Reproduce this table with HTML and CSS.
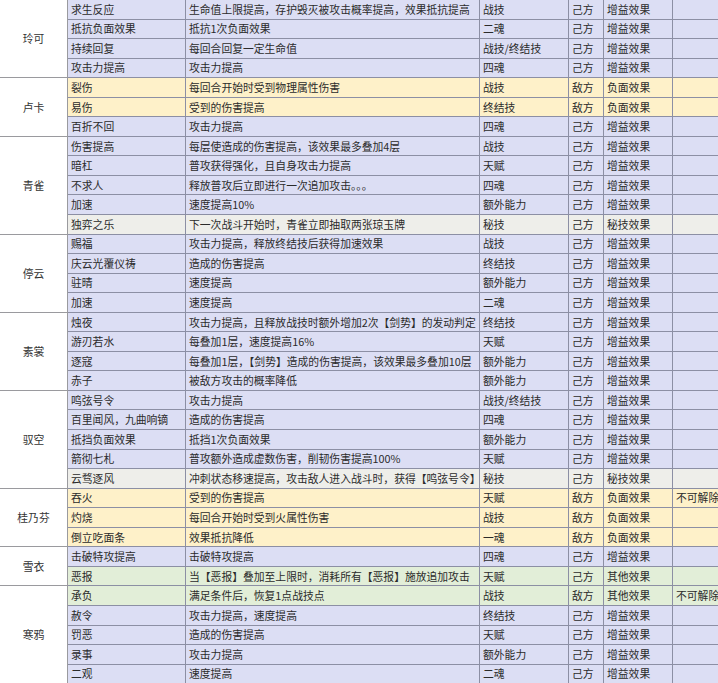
FILE: index.html
```html
<!DOCTYPE html>
<html lang="zh-CN">
<head>
<meta charset="utf-8">
<title>角色效果表</title>
<link rel="stylesheet" href="styles.css">
</head>
<body>
<table class="sheet">
<colgroup>
<col class="c-name"><col class="c-eff"><col class="c-desc"><col class="c-src"><col class="c-tgt"><col class="c-type"><col class="c-note">
</colgroup>
<tbody>
<tr class="buff"><td class="name" rowspan="4">玲可</td><td>求生反应</td><td>生命值上限提高，存护毁灭被攻击概率提高，效果抵抗提高</td><td>战技</td><td>己方</td><td>增益效果</td><td></td></tr>
<tr class="buff"><td>抵抗负面效果</td><td>抵抗1次负面效果</td><td>二魂</td><td>己方</td><td>增益效果</td><td></td></tr>
<tr class="buff"><td>持续回复</td><td>每回合回复一定生命值</td><td>战技/终结技</td><td>己方</td><td>增益效果</td><td></td></tr>
<tr class="buff"><td>攻击力提高</td><td>攻击力提高</td><td>四魂</td><td>己方</td><td>增益效果</td><td></td></tr>

<tr class="debuff"><td class="name" rowspan="3">卢卡</td><td>裂伤</td><td>每回合开始时受到物理属性伤害</td><td>战技</td><td>敌方</td><td>负面效果</td><td></td></tr>
<tr class="debuff"><td>易伤</td><td>受到的伤害提高</td><td>终结技</td><td>敌方</td><td>负面效果</td><td></td></tr>
<tr class="buff"><td>百折不回</td><td>攻击力提高</td><td>四魂</td><td>己方</td><td>增益效果</td><td></td></tr>

<tr class="buff"><td class="name" rowspan="5">青雀</td><td>伤害提高</td><td>每层使造成的伤害提高，该效果最多叠加4层</td><td>战技</td><td>己方</td><td>增益效果</td><td></td></tr>
<tr class="buff"><td>暗杠</td><td>普攻获得强化，且自身攻击力提高</td><td>天赋</td><td>己方</td><td>增益效果</td><td></td></tr>
<tr class="buff"><td>不求人</td><td>释放普攻后立即进行一次追加攻击。。。</td><td>四魂</td><td>己方</td><td>增益效果</td><td></td></tr>
<tr class="buff"><td>加速</td><td>速度提高10%</td><td>额外能力</td><td>己方</td><td>增益效果</td><td></td></tr>
<tr class="secret"><td>独弈之乐</td><td>下一次战斗开始时，青雀立即抽取两张琼玉牌</td><td>秘技</td><td>己方</td><td>秘技效果</td><td></td></tr>

<tr class="buff"><td class="name" rowspan="4">停云</td><td>赐福</td><td>攻击力提高，释放终结技后获得加速效果</td><td>战技</td><td>己方</td><td>增益效果</td><td></td></tr>
<tr class="buff"><td>庆云光覆仪祷</td><td>造成的伤害提高</td><td>终结技</td><td>己方</td><td>增益效果</td><td></td></tr>
<tr class="buff"><td>驻晴</td><td>速度提高</td><td>额外能力</td><td>己方</td><td>增益效果</td><td></td></tr>
<tr class="buff"><td>加速</td><td>速度提高</td><td>二魂</td><td>己方</td><td>增益效果</td><td></td></tr>

<tr class="buff"><td class="name" rowspan="4">素裳</td><td>烛夜</td><td>攻击力提高，且释放战技时额外增加2次【剑势】的发动判定</td><td>终结技</td><td>己方</td><td>增益效果</td><td></td></tr>
<tr class="buff"><td>游刃若水</td><td>每叠加1层，速度提高16%</td><td>天赋</td><td>己方</td><td>增益效果</td><td></td></tr>
<tr class="buff"><td>逐寇</td><td>每叠加1层，【剑势】造成的伤害提高，该效果最多叠加10层</td><td>额外能力</td><td>己方</td><td>增益效果</td><td></td></tr>
<tr class="buff"><td>赤子</td><td>被敌方攻击的概率降低</td><td>额外能力</td><td>己方</td><td>增益效果</td><td></td></tr>

<tr class="buff"><td class="name" rowspan="5">驭空</td><td>鸣弦号令</td><td>攻击力提高</td><td>战技/终结技</td><td>己方</td><td>增益效果</td><td></td></tr>
<tr class="buff"><td>百里闻风，九曲响镝</td><td>造成的伤害提高</td><td>四魂</td><td>己方</td><td>增益效果</td><td></td></tr>
<tr class="buff"><td>抵挡负面效果</td><td>抵挡1次负面效果</td><td>额外能力</td><td>己方</td><td>增益效果</td><td></td></tr>
<tr class="buff"><td>箭彻七札</td><td>普攻额外造成虚数伤害，削韧伤害提高100%</td><td>天赋</td><td>己方</td><td>增益效果</td><td></td></tr>
<tr class="secret"><td>云骛逐风</td><td>冲刺状态移速提高，攻击敌人进入战斗时，获得【鸣弦号令】</td><td>秘技</td><td>己方</td><td>秘技效果</td><td></td></tr>

<tr class="debuff"><td class="name" rowspan="3">桂乃芬</td><td>吞火</td><td>受到的伤害提高</td><td>天赋</td><td>敌方</td><td>负面效果</td><td>不可解除</td></tr>
<tr class="debuff"><td>灼烧</td><td>每回合开始时受到火属性伤害</td><td>战技</td><td>敌方</td><td>负面效果</td><td></td></tr>
<tr class="debuff"><td>倒立吃面条</td><td>效果抵抗降低</td><td>一魂</td><td>敌方</td><td>负面效果</td><td></td></tr>

<tr class="buff"><td class="name" rowspan="2">雪衣</td><td>击破特攻提高</td><td>击破特攻提高</td><td>四魂</td><td>己方</td><td>增益效果</td><td></td></tr>
<tr class="other"><td>恶报</td><td>当【恶报】叠加至上限时，消耗所有【恶报】施放追加攻击</td><td>天赋</td><td>己方</td><td>其他效果</td><td></td></tr>

<tr class="other"><td class="name" rowspan="5">寒鸦</td><td>承负</td><td>满足条件后，恢复1点战技点</td><td>战技</td><td>敌方</td><td>其他效果</td><td>不可解除</td></tr>
<tr class="buff"><td>赦令</td><td>攻击力提高，速度提高</td><td>终结技</td><td>己方</td><td>增益效果</td><td></td></tr>
<tr class="buff"><td>罚恶</td><td>造成的伤害提高</td><td>天赋</td><td>己方</td><td>增益效果</td><td></td></tr>
<tr class="buff"><td>录事</td><td>攻击力提高</td><td>额外能力</td><td>己方</td><td>增益效果</td><td></td></tr>
<tr class="buff"><td>二观</td><td>速度提高</td><td>二魂</td><td>己方</td><td>增益效果</td><td></td></tr>
</tbody>
</table>
</body>
</html>
```

FILE: styles.css
```css
html, body {
  margin: 0;
  padding: 0;
  background: #ffffff;
  overflow: hidden;
}

.sheet {
  border-collapse: collapse;
  table-layout: fixed;
  width: 721px;
  margin: -1px 0 0 -1px;
  font-family: "Noto Sans CJK SC", "Noto Sans", sans-serif;
  font-size: 10.8px;
  color: #2b2b2b;
}

.c-name { width: 68px; }
.c-eff { width: 118px; }
.c-desc { width: 294px; }
.c-src { width: 89px; }
.c-tgt { width: 35px; }
.c-type { width: 69px; }
.c-note { width: 48px; }

.sheet tr {
  height: 19.55px;
}

.sheet td {
  border: 1px solid #8c8fa4;
  padding: 0 0 0 3px;
  white-space: nowrap;
  overflow: hidden;
  line-height: 17px;
  vertical-align: middle;
}

.sheet td.name {
  background: #ffffff;
  text-align: center;
  padding: 0;
  border-color: #9a9a9e;
  color: #333333;
}

.buff td { background: #dcdef4; }
.debuff td { background: #fef1c9; }
.other td { background: #e2eed8; }
.secret td { background: #eeeeea; }
```
